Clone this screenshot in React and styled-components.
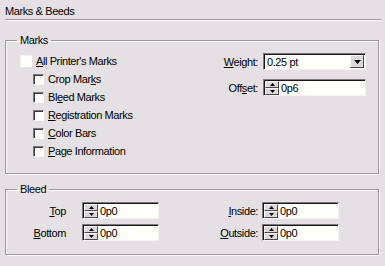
import React from 'react';
import styled, { createGlobalStyle } from 'styled-components';

const GlobalStyle = createGlobalStyle`
  html, body {
    margin: 0;
    padding: 0;
    background: #e4e0e4;
  }
  body {
    font-family: "Liberation Sans", Arial, sans-serif;
    font-size: 11px;
    letter-spacing: -0.4px;
    color: #000;
  }
`;

const Page = styled.div`
  width: 385px;
  height: 266px;
  box-sizing: border-box;
  padding: 0 0 0 5px;
  background: #e4e0e4;
`;

const Title = styled.div`
  height: 19px;
  line-height: 22px;
  margin-right: 4px;
  border-bottom: 1px solid #9c989c;
  box-shadow: 0 1px 0 #fbf9fb;
`;

const Group = styled.fieldset`
  margin: ${p => p.$top}px 6px 0 0;
  padding: 0;
  border: 1px solid #9c989c;
  box-shadow: inset 1px 1px 0 #fbf9fb, 1px 1px 0 #fbf9fb;
  min-width: 0;
  height: ${p => p.$height}px;
  box-sizing: border-box;
`;

const Legend = styled.legend`
  margin-left: 11px;
  padding: 0 3px;
  line-height: 12px;
`;

const MarksBody = styled.div`
  display: grid;
  grid-template-columns: 1fr auto;
  padding: 6px 12px 0 14px;
`;

const CheckList = styled.div`
  display: flex;
  flex-direction: column;
`;

const CheckRow = styled.label`
  display: flex;
  align-items: center;
  height: 18px;
  padding-left: ${p => (p.$sub ? 13 : 0)}px;
  gap: 4px;
  white-space: nowrap;
`;

const Box = styled.span`
  display: inline-block;
  box-sizing: border-box;
  width: ${p => (p.$flat ? 12 : 11)}px;
  height: ${p => (p.$flat ? 12 : 11)}px;
  background: #fffffb;
  border-style: solid;
  border-width: 1px;
  border-color: ${p =>
    p.$flat ? '#f2f0f2 #fffffb #fffffb #f2f0f2' : '#7c787c #fffffb #fffffb #7c787c'};
  box-shadow: ${p => (p.$flat ? 'none' : 'inset 1px 1px 0 #3a383a')};
`;

const U = styled.span`
  text-decoration: underline;
  text-underline-offset: 1px;
`;

const FieldGrid = styled.div`
  display: grid;
  grid-template-columns: ${p => p.$cols};
  row-gap: ${p => p.$gap}px;
  align-items: center;
  align-content: start;
  padding-top: ${p => p.$top}px;
`;

const Label = styled.span`
  text-align: right;
  padding-right: ${p => p.$pad}px;
  white-space: nowrap;
`;

const Field = styled.div`
  display: flex;
  align-items: stretch;
  box-sizing: border-box;
  height: ${p => p.$h}px;
  width: ${p => p.$w}px;
  background: #fffffb;
  border-style: solid;
  border-width: 1px;
  border-color: #7c787c #f4f2f4 #f4f2f4 #7c787c;
  box-shadow: inset 1px 1px 0 #1a181a;
`;

const FieldText = styled.span`
  flex: 1;
  display: flex;
  align-items: center;
  padding-left: ${p => p.$pad}px;
`;

const DropButton = styled.span`
  width: 14px;
  margin: 1px 1px 1px 0;
  box-sizing: border-box;
  background: #dcd8dc;
  border-style: solid;
  border-width: 1px;
  border-color: #fbf9fb #4a484a #4a484a #fbf9fb;
  display: flex;
  align-items: center;
  justify-content: center;
`;

const Spinner = styled.span`
  display: flex;
  flex-direction: column;
  width: 14px;
  margin: 1px 0 0 1px;
  box-sizing: border-box;
`;

const SpinHalf = styled.span`
  flex: 1;
  box-sizing: border-box;
  background: #dcd8dc;
  border-style: solid;
  border-width: 1px;
  border-color: #fbf9fb #4a484a #4a484a #fbf9fb;
  display: flex;
  align-items: center;
  justify-content: center;
`;

const Arrow = ({ up, size = 3 }) => (
  <svg width={size * 2 + 1} height={size + 1} viewBox={`0 0 ${size * 2 + 1} ${size + 1}`}>
    {up ? (
      <polygon points={`0,${size + 1} ${size * 2 + 1},${size + 1} ${size + 0.5},0`} fill="#000" />
    ) : (
      <polygon points={`0,0 ${size * 2 + 1},0 ${size + 0.5},${size + 1}`} fill="#000" />
    )}
  </svg>
);

const SpinField = ({ value, h = 17, w = 77 }) => (
  <Field $h={h} $w={w}>
    <Spinner>
      <SpinHalf><Arrow up size={2} /></SpinHalf>
      <SpinHalf><Arrow size={2} /></SpinHalf>
    </Spinner>
    <FieldText $pad={2}>{value}</FieldText>
  </Field>
);

export default function App() {
  return (
    <Page>
      <GlobalStyle />
      <Title>Marks &amp; Beeds</Title>

      <Group $top={14} $height={140}>
        <Legend>Marks</Legend>
        <MarksBody>
          <CheckList>
            <CheckRow><Box $flat /><span><U>A</U>ll Printer's Marks</span></CheckRow>
            <CheckRow $sub><Box /><span>Crop Mar<U>k</U>s</span></CheckRow>
            <CheckRow $sub><Box /><span>Bl<U>e</U>ed Marks</span></CheckRow>
            <CheckRow $sub><Box /><span><U>R</U>egistration Marks</span></CheckRow>
            <CheckRow $sub><Box /><span><U>C</U>olor Bars</span></CheckRow>
            <CheckRow $sub><Box /><span><U>P</U>age Information</span></CheckRow>
          </CheckList>
          <FieldGrid $cols="auto 103px" $gap={9} $top={1}>
            <Label $pad={5}><U>W</U>eight:</Label>
            <Field $h={17} $w={103}>
              <FieldText $pad={3}>0.25 pt</FieldText>
              <DropButton><Arrow size={3} /></DropButton>
            </Field>
            <Label $pad={5}>Off<U>s</U>et:</Label>
            <SpinField value="0p6" w={103} />
          </FieldGrid>
        </MarksBody>
      </Group>

      <Group $top={9} $height={72}>
        <Legend>Bleed</Legend>
        <FieldGrid $cols="76px 77px 103px 77px" $gap={5} $top={7}>
          <Label $pad={16}><U>T</U>op</Label>
          <SpinField value="0p0" />
          <Label $pad={4}><U>I</U>nside:</Label>
          <SpinField value="0p0" />
          <Label $pad={16}><U>B</U>ottom</Label>
          <SpinField value="0p0" />
          <Label $pad={4}><U>O</U>utside:</Label>
          <SpinField value="0p0" />
        </FieldGrid>
      </Group>
    </Page>
  );
}
